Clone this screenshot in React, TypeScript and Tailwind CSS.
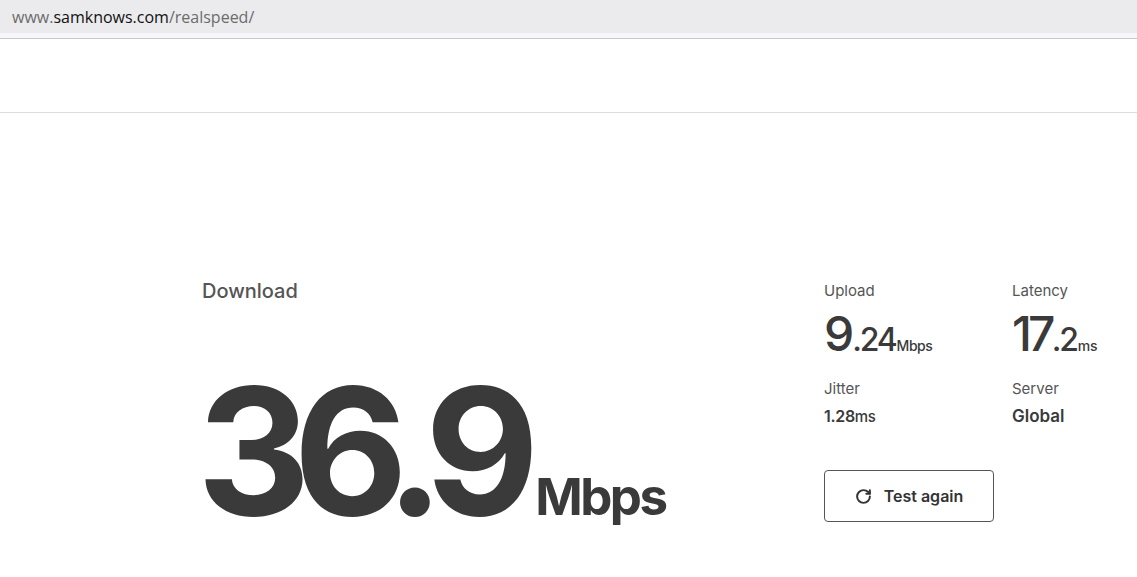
import { RotateCw } from 'lucide-react';

const font = { fontFamily: 'Inter, "Noto Sans", sans-serif' };

function SmallStat({ label, children }: { label: string; children: React.ReactNode }) {
  return (
    <div>
      <p className="text-[15px] leading-[18px] text-[#555]">{label}</p>
      {children}
    </div>
  );
}

export default function App() {
  return (
    <div className="w-[1137px] h-[577px] bg-white overflow-hidden font-['Inter',sans-serif] text-[#3a3a3a]">
      {/* browser address bar */}
      <div className="h-[33px] bg-[#ebebed] flex items-center pl-[12px] font-['Open_Sans','Noto_Sans',sans-serif] text-[16px] text-[#6b6b6b]">
        <span>www.</span>
        <span className="text-[#111]">samknows.com</span>
        <span>/realspeed/</span>
      </div>
      <div className="h-[5px] bg-[#f7f7f9] border-b border-[#c8c8c8] box-content" />

      {/* site header */}
      <div className="h-[74px] border-b border-[#dcdcdc]" />

      {/* results */}
      <div className="flex pl-[202px] pt-[166px]">
        <div className="w-[622px]">
          <p className="text-[20px] leading-[24px] font-medium text-[#555]">Download</p>
          <div className="flex items-baseline mt-[63px] -ml-[5px]">
            <span className="text-[176px] leading-[170px] font-bold tracking-[-0.097em] text-[#3a3a3a]" style={font}>
              36.9
            </span>
            <span className="text-[51px] leading-none font-bold tracking-[-0.05em] ml-[13px]">Mbps</span>
          </div>
        </div>

        <div className="grid grid-cols-[188px_120px] gap-y-[22px] mt-[3px] self-start">
          <SmallStat label="Upload">
            <div className="flex items-baseline mt-[10px] leading-none">
              <span className="text-[48px] font-medium tracking-[-0.04em]">9</span>
              <span className="text-[32px] font-medium tracking-[-0.07em]">.24</span>
              <span className="text-[14px] font-medium tracking-[-0.03em] ml-[1px]">Mbps</span>
            </div>
          </SmallStat>
          <SmallStat label="Latency">
            <div className="flex items-baseline mt-[10px] leading-none">
              <span className="text-[48px] font-medium tracking-[-0.08em]">17</span>
              <span className="text-[32px] font-medium tracking-[-0.07em]">.2</span>
              <span className="text-[14px] font-medium ml-[1px]">ms</span>
            </div>
          </SmallStat>
          <SmallStat label="Jitter">
            <p className="mt-[6px] text-[16px] leading-[24px] font-semibold tracking-[-0.02em]">
              1.28<span className="text-[15px] font-medium">ms</span>
            </p>
          </SmallStat>
          <SmallStat label="Server">
            <p className="mt-[6px] text-[17px] leading-[24px] font-semibold">Global</p>
          </SmallStat>
          <div className="col-span-2 mt-[19px]">
            <button className="w-[170px] h-[52px] border border-[#555] rounded-[4px] flex items-center justify-center gap-[12px] text-[16px] font-semibold text-[#333]">
              <RotateCw size={17} strokeWidth={2.8} />
              Test again
            </button>
          </div>
        </div>
      </div>
    </div>
  );
}
